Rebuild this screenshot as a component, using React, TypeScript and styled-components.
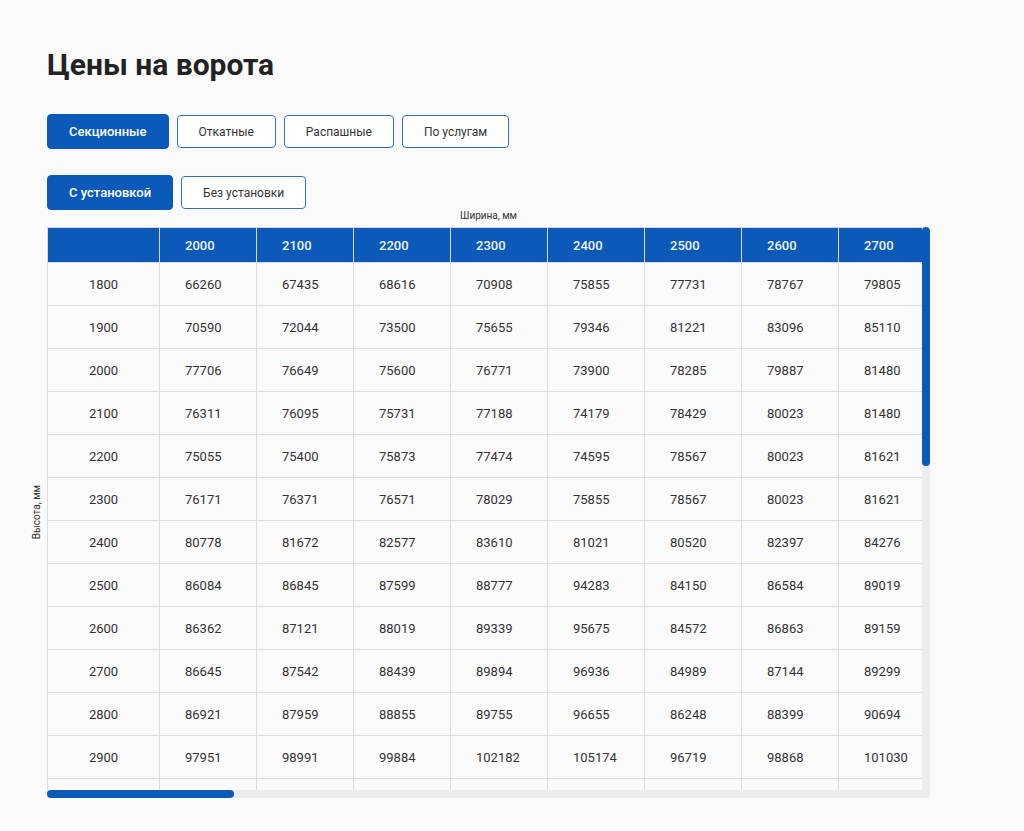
import React from "react";
import styled, { createGlobalStyle } from "styled-components";

const GlobalStyle = createGlobalStyle`
  html, body { margin: 0; padding: 0; background: #fafafa; }
  body { font-family: Roboto, "Noto Sans", "Liberation Sans", sans-serif; color: #333; }
`;

const BLUE = "#0b59b8";
const FIRST_COL = 112;
const COL = 97;
const VIEW_W = 875;
const VIEW_H = 563;
const HEAD_H = 35;
const ROW_H = 43;

const Page = styled.div`
  padding: 47px 0 0 47px;
`;

const Title = styled.h1`
  margin: 0;
  font-size: 30px;
  line-height: 36px;
  font-weight: 700;
  color: #222;
`;

const TabRow = styled.div<{ $top: number }>`
  display: flex;
  align-items: center;
  gap: 8px;
  margin-top: ${(p) => p.$top}px;
  height: 35px;
`;

const TabButton = styled.button<{ $active?: boolean }>`
  box-sizing: border-box;
  height: ${(p) => (p.$active ? 35 : 33)}px;
  padding: 0 21px;
  border-radius: 4px;
  border: 1px solid ${(p) => (p.$active ? BLUE : "#2f72c4")};
  background: ${(p) => (p.$active ? BLUE : "#fff")};
  color: ${(p) => (p.$active ? "#fff" : "#333")};
  font-family: Roboto, "Liberation Sans", sans-serif;
  font-size: ${(p) => (p.$active ? 13 : 12)}px;
  font-weight: ${(p) => (p.$active ? 500 : 400)};
  cursor: pointer;
`;

const WidthLabel = styled.div`
  width: 883px;
  text-align: center;
  font-size: 10px;
  line-height: 12px;
  color: #333;
`;

const TableArea = styled.div`
  display: flex;
  align-items: center;
  margin-left: -16px;
  margin-top: 5px;
`;

const HeightLabel = styled.div`
  width: 16px;
  font-size: 10px;
  line-height: 12px;
  color: #333;
  writing-mode: vertical-rl;
  transform: rotate(180deg);
  white-space: nowrap;
`;

const Frame = styled.div`
  display: grid;
  grid-template-columns: ${VIEW_W}px 8px;
  grid-template-rows: ${VIEW_H}px 8px;
  border-radius: 0 4px 4px 0;
  overflow: hidden;
`;

const Viewport = styled.div`
  overflow: hidden;
`;

const Track = styled.div<{ $vertical?: boolean }>`
  background: #ececec;
  display: flex;
  flex-direction: ${(p) => (p.$vertical ? "column" : "row")};
`;

const Thumb = styled.div`
  background: ${BLUE};
  border-radius: 4px;
  flex: none;
`;

const Corner = styled.div`
  background: #ececec;
`;

const Table = styled.table<{ $width: number }>`
  width: ${(p) => p.$width}px;
  border-collapse: collapse;
  table-layout: fixed;
  font-size: 13px;
`;

const HeadCell = styled.th<{ $first?: boolean }>`
  height: ${HEAD_H - 1}px;
  padding: 0 0 0 ${(p) => (p.$first ? 0 : 25)}px;
  background: ${BLUE};
  color: #eef3fa;
  font-weight: 500;
  text-align: left;
  border: 1px solid #d6dbe2;
  white-space: nowrap;
  overflow: hidden;
`;

const Cell = styled.td<{ $first?: boolean }>`
  height: ${ROW_H - 1}px;
  padding: 0 0 0 ${(p) => (p.$first ? 0 : 25)}px;
  text-align: ${(p) => (p.$first ? "center" : "left")};
  background: #fafafa;
  color: #333;
  border: 1px solid #dddddd;
  white-space: nowrap;
  overflow: hidden;
`;

const known: number[][] = [
  [66260, 67435, 68616, 70908, 75855, 77731, 78767, 79805],
  [70590, 72044, 73500, 75655, 79346, 81221, 83096, 85110],
  [77706, 76649, 75600, 76771, 73900, 78285, 79887, 81480],
  [76311, 76095, 75731, 77188, 74179, 78429, 80023, 81480],
  [75055, 75400, 75873, 77474, 74595, 78567, 80023, 81621],
  [76171, 76371, 76571, 78029, 75855, 78567, 80023, 81621],
  [80778, 81672, 82577, 83610, 81021, 80520, 82397, 84276],
  [86084, 86845, 87599, 88777, 94283, 84150, 86584, 89019],
  [86362, 87121, 88019, 89339, 95675, 84572, 86863, 89159],
  [86645, 87542, 88439, 89894, 96936, 84989, 87144, 89299],
  [86921, 87959, 88855, 89755, 96655, 86248, 88399, 90694],
  [97951, 98991, 99884, 102182, 105174, 96719, 98868, 101030],
];

const widths = Array.from({ length: 41 }, (_, i) => 2000 + i * 100);
const heights = Array.from({ length: 30 }, (_, i) => 1800 + i * 100);

function price(r: number, c: number): number {
  if (r < known.length && c < 8) return known[r][c];
  const rr = Math.min(r, known.length - 1);
  const cc = Math.min(c, 7);
  const base = known[rr][cc];
  const extraCols = Math.max(0, c - 7);
  const extraRows = Math.max(0, r - (known.length - 1));
  const wobble = ((r * 37 + c * 53) % 17) * 41;
  return base + extraCols * 1380 + extraRows * 3120 + wobble;
}

const groups = [
  ["Секционные", "Откатные", "Распашные", "По услугам"],
  ["С установкой", "Без установки"],
];

export default function App() {
  const tableW = FIRST_COL + widths.length * COL;
  const tableH = HEAD_H + heights.length * ROW_H;
  const hThumb = Math.round((VIEW_W * VIEW_W) / tableW);
  const vThumb = Math.round((VIEW_H * VIEW_H) / tableH);

  return (
    <>
      <GlobalStyle />
      <Page>
        <Title>Цены на ворота</Title>
        <TabRow $top={31}>
          {groups[0].map((t, i) => (
            <TabButton key={t} $active={i === 0}>
              {t}
            </TabButton>
          ))}
        </TabRow>
        <TabRow $top={26}>
          {groups[1].map((t, i) => (
            <TabButton key={t} $active={i === 0}>
              {t}
            </TabButton>
          ))}
        </TabRow>
        <WidthLabel>Ширина, мм</WidthLabel>
        <TableArea>
          <HeightLabel>Высота, мм</HeightLabel>
          <Frame>
            <Viewport>
              <Table $width={tableW}>
                <colgroup>
                  <col style={{ width: FIRST_COL }} />
                  {widths.map((w) => (
                    <col key={w} style={{ width: COL }} />
                  ))}
                </colgroup>
                <thead>
                  <tr>
                    <HeadCell $first />
                    {widths.map((w) => (
                      <HeadCell key={w}>{w}</HeadCell>
                    ))}
                  </tr>
                </thead>
                <tbody>
                  {heights.map((h, r) => (
                    <tr key={h}>
                      <Cell $first>{h}</Cell>
                      {widths.map((w, c) => (
                        <Cell key={w}>{price(r, c)}</Cell>
                      ))}
                    </tr>
                  ))}
                </tbody>
              </Table>
            </Viewport>
            <Track $vertical>
              <Thumb style={{ height: vThumb }} />
            </Track>
            <Track>
              <Thumb style={{ width: hThumb }} />
            </Track>
            <Corner />
          </Frame>
        </TableArea>
      </Page>
    </>
  );
}
